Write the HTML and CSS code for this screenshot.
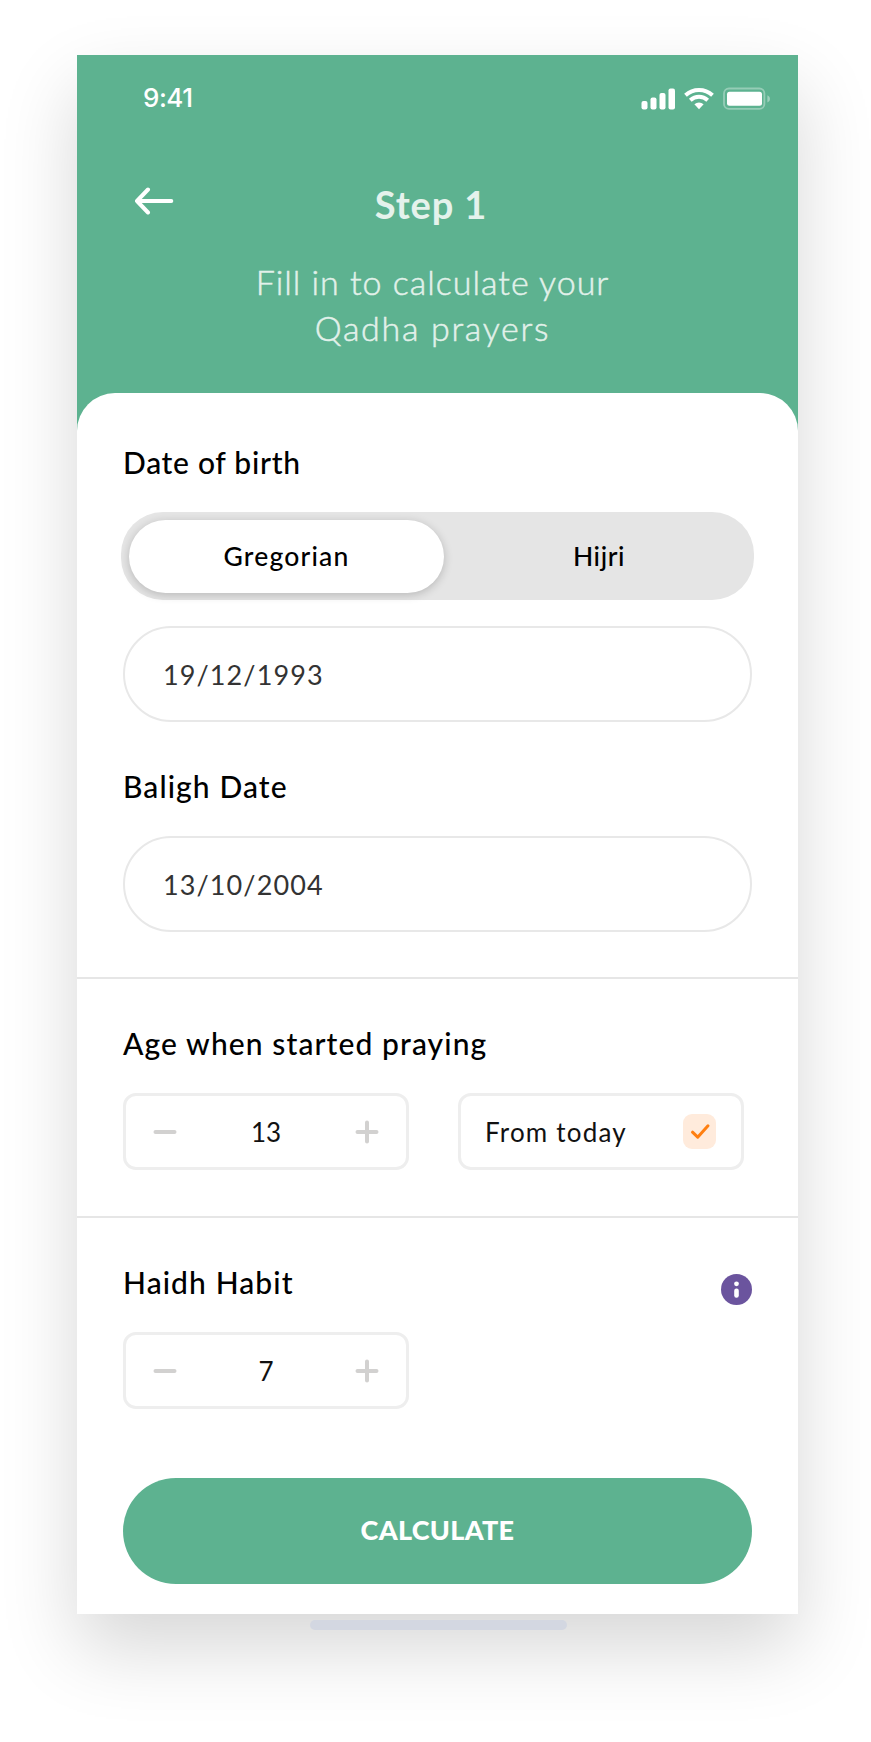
FILE: index.html
```html
<!DOCTYPE html>
<html lang="en">

<head>
    <meta charset="UTF-8">
    <meta name="viewport" content="width=device-width, initial-scale=1.0">
    <title>Step 1</title>
    <link rel="stylesheet" href="styles.css">
</head>

<body>
    <div class="phone">
        <header class="header">
            <div class="status">
                <span class="time">9:41</span>
                <svg class="status-icons" width="130" height="24" viewBox="0 0 130 24" fill="#fff">
                    <rect x="0.5" y="14" width="6" height="8.5" rx="2" />
                    <rect x="9.5" y="10.5" width="6" height="12" rx="2" />
                    <rect x="18.5" y="6" width="6" height="16.5" rx="2" />
                    <rect x="27.5" y="1.5" width="6.5" height="21" rx="2" />
                    <g fill="none" stroke="#fff" stroke-width="4">
                        <path d="M44.5 8.2a20 20 0 0 1 27 0" />
                        <path d="M49.3 13.2a13 13 0 0 1 17.4 0" />
                    </g>
                    <path d="M53.4 17.2a7 7 0 0 1 9.2 0L58 22.3z" />
                    <rect x="83" y="1.5" width="40.4" height="20.4" rx="5" fill="none" stroke="#fff" stroke-width="1.8" opacity=".35" />
                    <rect x="86" y="4.8" width="35" height="14" rx="2.5" />
                    <path d="M126.4 8.2c3.4 1.4 3.4 5.8 0 7.2z" opacity=".4" />
                </svg>
            </div>
            <div class="title-row">
                <svg class="back" width="40" height="28" viewBox="0 0 40 28" fill="none" stroke="#fff" stroke-width="4" stroke-linecap="round" stroke-linejoin="round">
                    <path d="M37.3 14H3M14 2.5L3 14l11 11.5" />
                </svg>
                <h1>Step 1</h1>
            </div>
            <p class="subtitle"><span>Fill in to calculate your</span><br><span class="line-two">Qadha prayers</span></p>
        </header>

        <main class="sheet">
            <section class="dates">
                <h2 class="birth">Date of birth</h2>
                <div class="switch">
                    <div class="option active">Gregorian</div>
                    <div class="option">Hijri</div>
                </div>
                <div class="field">19/12/1993</div>
                <h2>Baligh Date</h2>
                <div class="field">13/10/2004</div>
            </section>

            <section class="age">
                <h2>Age when started praying</h2>
                <div class="row">
                    <div class="box stepper">
                        <svg width="24" height="24" viewBox="0 0 24 24"><path d="M2.5 12h19" /></svg>
                        <span>13</span>
                        <svg width="24" height="24" viewBox="0 0 24 24"><path d="M2.5 12h19M12 2.5v19" /></svg>
                    </div>
                    <div class="box today">
                        <span>From today</span>
                        <svg class="check" width="33" height="35" viewBox="0 0 33 35" fill="none">
                            <rect width="33" height="35" rx="9" fill="#ffebdc" />
                            <path d="M9.5 18.2l5.2 5L25 11.8" stroke="#ff7f11" stroke-width="3" stroke-linecap="round" stroke-linejoin="round" />
                        </svg>
                    </div>
                </div>
            </section>

            <section class="habit">
                <div class="heading">
                    <h2>Haidh Habit</h2>
                    <svg class="info" width="31" height="31" viewBox="0 0 31 31">
                        <circle cx="15.5" cy="15.5" r="15.5" fill="#6b549e" />
                        <circle cx="15.5" cy="9.8" r="2.4" fill="#fff" />
                        <rect x="13.2" y="14.6" width="4.6" height="9.2" rx="2.2" fill="#fff" />
                    </svg>
                </div>
                <div class="box stepper">
                    <svg width="24" height="24" viewBox="0 0 24 24"><path d="M2.5 12h19" /></svg>
                    <span>7</span>
                    <svg width="24" height="24" viewBox="0 0 24 24"><path d="M2.5 12h19M12 2.5v19" /></svg>
                </div>
                <div class="button">CALCULATE</div>
            </section>
        </main>
    </div>
    <div class="home-bar"></div>
</body>

</html>
```

FILE: styles.css
```css
* {
    box-sizing: border-box;
}

body {
    margin: 0;
    padding: 55px 0 0 77px;
    height: 1742px;
    background: #fff;
    font-family: Lato, "Liberation Sans", sans-serif;
    color: #000;
    overflow: hidden;
}

h1, h2, p {
    margin: 0;
}

.phone {
    width: 721px;
    height: 1559px;
    background: #5db290;
    box-shadow: 0 34px 72px rgba(0, 0, 0, 0.16);
}

/* header */
.header {
    height: 338px;
    padding-top: 28px;
    color: #fff;
}

.status {
    display: flex;
    justify-content: space-between;
    align-items: center;
    height: 30px;
    padding: 0 27px 0 66px;
}

.time {
    margin-bottom: 2px;
    font-family: Inter, sans-serif;
    font-size: 26px;
    font-weight: 500;
    letter-spacing: -0.5px;
}

.status-icons {
    margin-top: 2px;
}

.title-row {
    display: grid;
    grid-template-columns: 57px 1fr 70px;
    margin-top: 67px;
    height: 50px;
}

.back {
    margin: 7px 0 0 57px;
}

h1 {
    font-size: 38px;
    line-height: 48px;
    font-weight: 700;
    text-align: center;
    color: #e5f2ec;
    letter-spacing: 0.9px;
}

.subtitle {
    margin: 29px 10px 0 0;
    font-size: 34px;
    line-height: 46px;
    font-weight: 300;
    text-align: center;
    color: #e2f1ea;
    -webkit-text-stroke: 0.5px #e2f1ea;
    letter-spacing: 1px;
}

.line-two {
    letter-spacing: 1.7px;
}

/* white sheet */
.sheet {
    height: 1221px;
    background: #fff;
    border-radius: 38px 38px 0 0;
}

section {
    padding: 44px 46px 0;
}

.dates {
    height: 584px;
    padding-top: 49px;
}

.age, .habit {
    border-top: 2px solid #e6e6e6;
}

.age {
    height: 239px;
}

h2 {
    margin-bottom: 30px;
    font-size: 30px;
    line-height: 40px;
    font-weight: 500;
    letter-spacing: 1.1px;
}

.birth {
    letter-spacing: 0.7px;
}

.switch {
    display: flex;
    width: 633px;
    height: 88px;
    margin: 0 0 26px -2px;
    padding: 8px;
    border-radius: 42px;
    background: #e5e5e5;
}

.option {
    flex: 0 0 315px;
    height: 73px;
    border-radius: 37px;
    font-size: 26.5px;
    line-height: 73px;
    font-weight: 500;
    text-align: center;
    letter-spacing: 1.2px;
}

.option:last-child {
    flex: 1;
    padding-left: 8px;
    letter-spacing: 0.6px;
}

.active {
    background: #fff;
    box-shadow: 0 2px 10px rgba(0, 0, 0, 0.2);
}

.field {
    height: 96px;
    margin-bottom: 44px;
    padding-left: 38px;
    border: 2px solid #e8e8e8;
    border-radius: 48px;
    font-size: 27px;
    line-height: 94px;
    color: #333;
    letter-spacing: 1.1px;
}

.row {
    display: flex;
    gap: 49px;
}

.box {
    display: flex;
    justify-content: space-between;
    align-items: center;
    width: 286px;
    height: 77px;
    border: 3px solid #eee;
    border-radius: 13px;
    font-size: 26px;
    color: #111;
}

.stepper {
    padding: 0 27px;
}

.stepper path {
    stroke: #d2d1d0;
    stroke-width: 4;
    stroke-linecap: round;
}

.today {
    padding: 0 25px 0 24px;
    letter-spacing: 1.2px;
}

.heading {
    display: flex;
    justify-content: space-between;
}

.info {
    margin-top: 12px;
}

.button {
    height: 106px;
    margin-top: 69px;
    border-radius: 53px;
    background: #5db290;
    color: #fff;
    font-size: 27px;
    line-height: 103px;
    font-weight: 900;
    text-align: center;
    letter-spacing: 0.3px;
}

.home-bar {
    position: relative;
    width: 257px;
    height: 10px;
    margin: 6px 0 0 233px;
    border-radius: 5px;
    background: #d3d7e1;
}
```
